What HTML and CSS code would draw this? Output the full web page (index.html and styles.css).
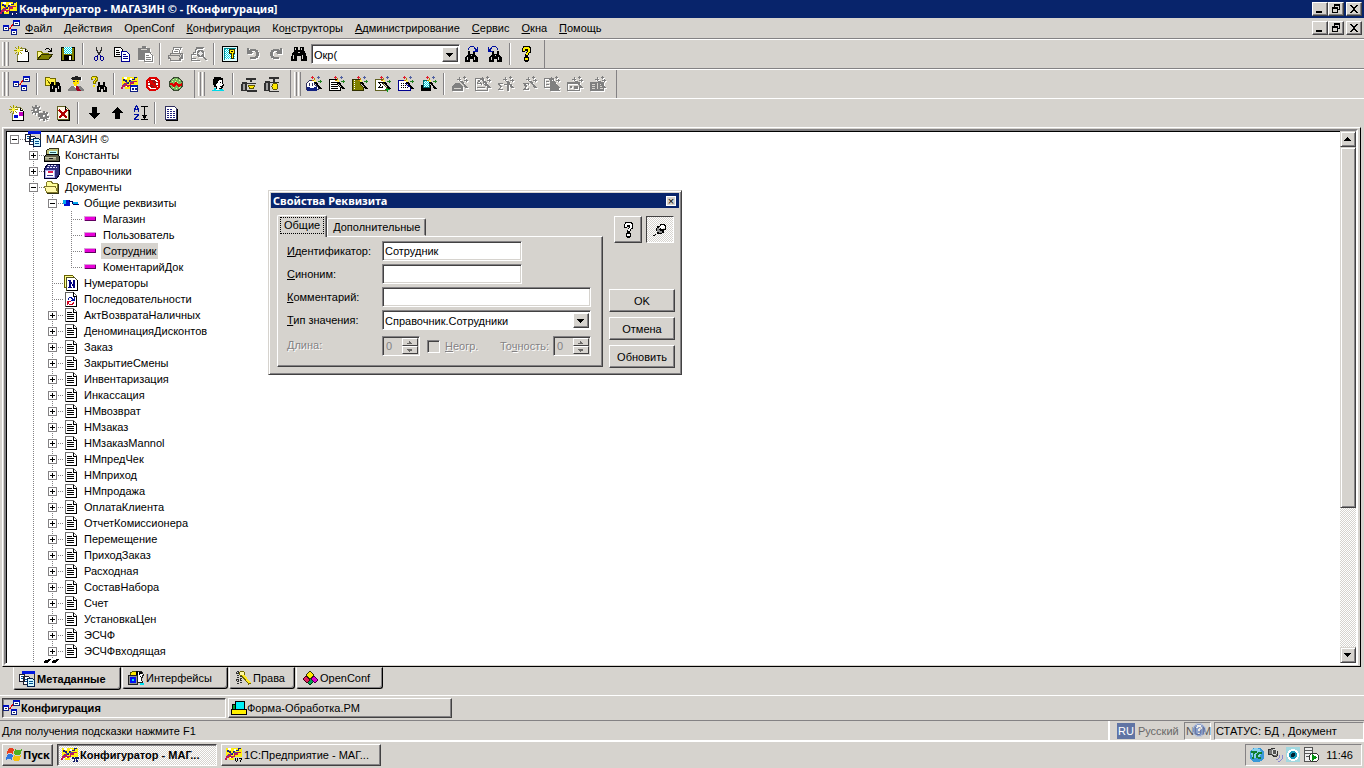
FILE: index.html
```html
<!DOCTYPE html>
<html lang="ru">
<head>
<meta charset="utf-8">
<title>Конфигуратор - МАГАЗИН © - [Конфигурация]</title>
<link rel="stylesheet" href="styles.css">
</head>
<body>
<svg class="sprite" aria-hidden="true">
<defs>
<pattern id="dither" width="2" height="2" patternUnits="userSpaceOnUse"><path fill="#fff" d="M0 0h2v2H0z"/><path fill="#d6d3ce" d="M0 0h1v1H0zM1 1h1v1H1z"/></pattern>
<pattern id="cyanDither" width="2" height="2" patternUnits="userSpaceOnUse"><path fill="#fff" d="M0 0h2v2H0z"/><path fill="#00d8e8" d="M0 0h1v1H0zM1 1h1v1H1z"/></pattern>
</defs>
<symbol id="logo" viewBox="0 0 18 16"><path fill="#ffef10" d="M1 1h16v9H9v3H4v-2H1z"/><path fill="#fff" d="M3 1h3v2H3zM9 2h2v2H9zM5 9h3v2H5z"/><path fill="#182078" d="M2 3h2v1h2v2h2V4h2v2H8v2H6V6H4V5H2zM11 3h2V1h3v1h-2v2h-3z"/><path fill="#c01858" d="M1 9h2V7h3v2h3V6h3V5h4v1h-3v2h-3v2H8v1H6v-1H4v1H2v2H0v-2h1z"/><path fill="#505098" d="M5 6h2v1H5zM9 5h3v1H9zM2 8h2v1H2z"/></symbol>
<symbol id="app" viewBox="0 0 18 16"><use href="#logo" width="18" height="16"/><path fill="#101868" d="M11 10h2v1h1v-1h4v2h-1v3h-2v-3h-1v3h-2v-3h-1z"/><path fill="#fff" d="M12 12h1v2h-1zM16 12h1v1h-1z"/></symbol>
<symbol id="appwin" viewBox="0 0 18 16"><use href="#logo" width="18" height="16"/><path fill="#fff" stroke="#102080" d="M9.500 9.500h7v6h-7z"/><path fill="#0018c0" d="M10 9h6v2h-6z"/><path fill="#102080" d="M11 12h2v2h-2zM14 12h2v2h-2z"/></symbol>
<symbol id="v7" viewBox="0 0 18 16"><use href="#logo" width="18" height="16"/><path fill="#000" d="M10 11h1v3h-1zM11 14h1v1h-1zM12 11h1v3h-1zM14 11h3v2h-1v2h-1v-2h1v-1h-2z"/></symbol>
<symbol id="net" viewBox="0 0 18 16"><path stroke="#e00000" fill="none" d="M5 8h2l4-5M7 8l4 4"/><path fill="#fff" stroke="#102080" d="M.5 5.500h5v5h-5z"/><path fill="#0010c0" d="M0 5h6v2H0z"/><path fill="#203060" d="M2 8h2v1H2z"/><path fill="#fff" stroke="#102080" d="M10.500 .5h6v5h-6zM8.500 9.500h5v5h-5z"/><path fill="#0010c0" d="M10 0h7v2h-7zM8 9h6v2H8z"/><path fill="#203060" d="M12 3h3v1h-3zM10 12h2v1h-2z"/></symbol>
<symbol id="new" viewBox="0 0 16 16"><path fill="#fff" d="M4 3h8l3 3v9H4z"/><path fill="none" stroke="#808040" d="M3.500 8v7M7 2.500h4.500l3 3"/><path fill="#000" d="M14 6h1v10H3v-1h11zM11 3h1v2h2v1h-3z"/><path fill="#a09800" d="M4 0h1v3H4zM1 1h1v1H1zM2 2h1v1H2zM7 1h1v1H7zM6 2h1v1H6zM0 4h3v1H0zM6 4h3v1H6zM2 6h1v1H2zM1 7h1v1H1zM6 6h1v1H6zM7 7h1v1H7zM4 6h1v3H4z"/><path fill="#fff840" d="M3 3h3v3H3zM5 1h1v1H5zM1 5h1v1H1zM8 3h1v1H8z"/></symbol>
<symbol id="open" viewBox="0 0 16 16"><path fill="#fff890" stroke="#808000" d="M.5 13.500v-8h4l1 2h6v3"/><path fill="#808000" stroke="#303000" d="M.5 13.500l4-5h11l-4 5z"/><path fill="#000" d="M8 3h1v1H8zM9 2h3v1H9zM12 3h1v1h1V2h1v4h-4V5h2V4h-1z"/></symbol>
<symbol id="save" viewBox="0 0 16 16"><path fill="#808000" stroke="#000" d="M1.500 1.500h13v13h-13z"/><path fill="url(#cyanDither)" d="M4 1h8v7H4z"/><path fill="#000" d="M4 9h8v6H4z"/><path fill="#fff" d="M9 10h2v4H9z"/></symbol>
<symbol id="cut" viewBox="0 0 16 16"><path fill="#303030" d="M5 1h1v4H5zM6 4h1v3H6zM7 6h2v3H7zM9 4h1v3H9zM10 1h1v4h-1z"/><path fill="#000090" d="M6 9h1v1H6zM4 10h3v1H4zM3 11h1v3H3zM6 11h1v3H6zM4 14h2v1H4zM9 9h1v1H9zM9 10h3v1H9zM9 11h1v3H9zM12 11h1v3h-1zM10 14h2v1h-2z"/></symbol>
<symbol id="copy" viewBox="0 0 16 16"><path fill="#fff" stroke="#000" d="M.5 1.500h6l2 2v7h-8z"/><path stroke="#000" d="M2 4.500h3M2 6.500h4M2 8.500h4"/><path fill="#fff" stroke="#000090" d="M7.500 5.500h5l3 3v7h-8z"/><path stroke="#000090" d="M9 8.500h3M9 10.500h5M9 12.500h5"/></symbol>
<symbol id="paste" viewBox="0 0 16 16"><path fill="#808080" d="M1 2h4V0h4v2h4v4h1v8H1z"/><path fill="#fff" stroke="#808080" d="M7.500 6.500h5l3 3v6h-8z"/><path stroke="#808080" d="M9 9.500h3M9 11.500h5M9 13.500h5"/><path fill="#d6d3ce" d="M4 3h6v1H4z"/></symbol>
<symbol id="print" viewBox="0 0 16 16"><path fill="#fff" d="M5 2h8l-2 6h3v5H2V9l2-1z"/><path fill="#808080" d="M5 1h9v1h-1v2h-1v3h3v6h-2v2H2v-2H0V9h2V7h2V4h1zM6 2v2H5v3h6V4h1V2z"/><path fill="#d6d3ce" d="M3 8h9v1H2v1H1v1h10v1H3v1h8v-2h1V9h1V8h1v1h-1v2h-1v1h-1v2H3v-1h8v-1H2v-1h9v-1H2V9h1z"/><path fill="#808080" d="M7 3h4v1H7zM6 5h4v1H6z"/></symbol>
<symbol id="preview" viewBox="0 0 16 16"><path fill="#808080" d="M5 1h8v1h-1v1H6v1H5v3H3v1h2v1H1v3h4v1H1v1h8v1H0V8h2V6h2V3h1z"/><circle cx="9.500" cy="7.500" r="3" fill="#e8e8e8" stroke="#808080" stroke-width="1.500"/><path stroke="#808080" stroke-width="2" d="M11.500 10l4 4"/></symbol>
<symbol id="key" viewBox="0 0 16 16"><path fill="#e0ffff" stroke="#000" d="M.5.500h15v15H.5z"/><path fill="#008890" d="M2 2h12v1H2zM2 2h1v12H2z"/><path fill="url(#cyanDither)" d="M3 3h10v10H3z"/><path fill="#ffec00" stroke="#303000" d="M7.500 3.500h5v4h-1v5h-2v-5h-2z"/><path fill="#000" d="M9 5h2v1H9z"/></symbol>
<symbol id="undo" viewBox="0 0 16 16"><path fill="#808080" d="M2 2h2v2h1V3h6v1h2v2h1v4h-1v2h-2v1H5v-2h5v-1h1V6h-1V5H7v1h1v1H7v1H2z"/></symbol>
<symbol id="redo" viewBox="0 0 16 16"><path fill="#808080" d="M14 2h-2v2h-1V3H5v1H3v2H2v4h1v2h2v1h6v-2H6v-1H5V6h1V5h3v1H8v1h1v1h5z"/></symbol>
<symbol id="bino" viewBox="0 0 16 16"><path fill="#000" d="M3 1h4v3h2V1h4v4l1 1 2 5v4h-6v-5H6v5H0v-4l2-5 1-1z"/><path fill="#d6d3ce" d="M4 2h1v2H4zM10 2h1v2h-1zM2 9h1v4H2zM11 9h1v4h-1zM7 6h2v1H7z"/></symbol>
<symbol id="minibino" viewBox="0 0 16 16"><path fill="#000" d="M4 5h2v3h3V5h2v3l3 4v4h-5v-3H6v3H1v-4l3-4z"/><path fill="#d6d3ce" d="M3 11h1v3H3zM10 11h1v3h-1zM7 9h1v1H7z"/></symbol>
<symbol id="findnext" viewBox="0 0 16 16"><use href="#minibino" width="16" height="16"/><path fill="#0010a0" d="M4 2h1v2H4zM5 1h1v1H5zM6 0h4v1H6zM10 1h1v1h1v1h1V1h1v5H9V5h2V3h-1z"/></symbol>
<symbol id="findprev" viewBox="0 0 16 16"><use href="#minibino" x="1" width="16" height="16"/><path fill="#0010a0" d="M11 2h-1v2h1zM10 1H9v1h1zM9 0H5v1h4zM5 1H4v1H3v1H2V1H1v5h5V5H4V3h1z"/></symbol>
<symbol id="help" viewBox="0 0 16 16"><path fill="#000" d="M5 0h7v1h1v6h-2v2h-1v2h1v4h-1v1H7v-1H6v-4h1V8h1V6h1V5H7v1H4V2h1z"/><path fill="#fff000" d="M6 1h5v1h1v4h-1v1h-1v2H8V7h1V6h1V3H7v2H5V2h1zM7 12h3v2H7z"/></symbol>
<symbol id="findfolder" viewBox="0 0 16 16"><path fill="#fff040" stroke="#706800" d="M.5 9.500v-8h4l1 1h5v7z"/><path stroke="#706800" d="M2 4l4 5"/><path fill="#000" d="M6 6h3v3h2V6h3l2 5v5h-4v-4h-2v4H5v-5z"/><path fill="#d6d3ce" d="M7 10h1v3H7zM13 10h1v3h-1z"/></symbol>
<symbol id="master" viewBox="0 0 16 16"><path fill="#202020" d="M2 2l6-2 6 2-2 2H5z"/><path fill="#ffe000" d="M5 4h6v4H9v3H6V8H5z"/><path fill="#404040" d="M5 5h2v1H5zM9 5h1v1H9z"/><path fill="#808080" d="M0 14l3-4h10l3 4v1H0z"/><path fill="#a00020" d="M7 10h3l3 5h-4z"/><path fill="#fff" d="M6 10h2v3zM13 1h1v4h-1z"/></symbol>
<symbol id="findhelp" viewBox="0 0 16 16"><path fill="#807800" d="M0 1h1V0h5v1h1v4H6v1H5v2H2V5h1V4h1V2H2v2H0z"/><path fill="#ffec00" d="M1 1h4v1h1v2H5v1H4v2H3V5h1V4h1V2H2v1H1zM2 9h2v2H2z"/><path fill="#000" d="M7 6h2v3h3V6h2v3l2 3v4h-4v-3h-2v3H6v-4l1-3z"/><path fill="#d6d3ce" d="M8 11h1v3H8zM13 11h1v3h-1z"/></symbol>
<symbol id="nobug" viewBox="0 0 16 16"><circle cx="8" cy="8" r="6.500" fill="#fff" stroke="#e00000" stroke-width="2"/><path fill="#c00000" d="M6 4h4v1h1v6h-1v1H6v-1H5V5h1z"/><path stroke="#802020" d="M3 6.500h10M3 9.500h10M5 3l2 2M11 3L9 5M8.500 4v8"/><path stroke="#fff" d="M4 5l8 8"/><path stroke="#e00000" stroke-width="2" d="M3 3l10 10"/></symbol>
<symbol id="gauge" viewBox="0 0 16 16"><circle cx="8" cy="8" r="6.500" fill="#78b860" stroke="#384830"/><path fill="#d8ffa0" d="M5 3h1v1H5zM8 3h1v1H8zM11 4h1v1h-1zM4 5h1v1H4zM7 5h1v1H7zM9 6h1v1H9zM5 11h1v1H5zM8 12h1v1H8zM11 11h1v1h-1z"/><path fill="none" stroke="#e00000" stroke-width="2" d="M2 8h2l2 2 2-3 3 3 3-2"/></symbol>
<symbol id="head" viewBox="0 0 16 16"><path fill="#00d8e8" d="M2 15v-1h2v-2h2v2h4v-1h3v1h1v1z"/><path fill="#fff" d="M7 3h5v3h1v2h1v1h-1v3h-2v1H9v1H6V8h1z"/><path fill="#000" d="M4 1h7v1h2v4h-1V4H9v1H8v2H7v1H6v2h1v3H6v-2H4V9H3V3h1zM12 6h1v2h1v2h-1v2h-1v1H9v-1h2v-1h-1v-1h2V9h1V8h-1zM10 6h1v1h-1z"/></symbol>
<symbol id="valve" viewBox="0 0 16 16"><path fill="#303030" d="M5 2h10v2h-4v2H9V4H5zM1 6h5v9H0V8h1z"/><path fill="#a0a0a0" d="M2 8h2v6H2z"/><path fill="#303030" d="M6 7h9v1H6zM6 14h10v2H6z"/><path fill="#ffe800" stroke="#605800" d="M7.500 9.500h6l-1 3h-4z"/></symbol>
<symbol id="valve2" viewBox="0 0 16 16"><path fill="#303030" d="M5 1h10v2h-4v3H9V3H5zM1 5h5v10H0V7h1z"/><path fill="#a0a0a0" d="M2 7h2v7H2z"/><path fill="#303030" d="M6 6h9v1H6zM5 15h10v1H5z"/><circle cx="11" cy="10.500" r="3" fill="#ffe800" stroke="#605800"/></symbol>
<symbol id="wand" viewBox="0 0 16 16"><path stroke="#000" stroke-width="2" d="M9 6l6 7"/><path fill="#c08000" d="M6 4h4v1H6zM8 2h1v4H8z"/><path fill="#e02030" d="M5 1h3v1H5zM6 0h1v3H6z"/><path fill="#208020" d="M12 5h4v1h-4zM14 4h1v3h-1z"/><path fill="#5060a0" d="M11 1h3v1h-3zM12 0h1v3h-1z"/><path fill="#f8f060" d="M8 4h2v2H8z"/></symbol>
<symbol id="gwand" viewBox="0 0 16 16"><path stroke="#808080" stroke-width="2" d="M9 5l6 7"/><path fill="#808080" d="M5 3h4v1H5zM7 1h1v4H7zM12 4h4v1h-4zM14 3h1v3h-1zM11 1h3v1h-3zM12 0h1v3h-1z"/></symbol>
<symbol id="c1" viewBox="0 0 16 16"><path fill="#fff" stroke="#303060" d="M.5 13.500v-6l3-3h5v4l4 3v2z"/><path fill="#102080" d="M1 11h10v4H1z"/><path fill="#fff" d="M4 11h4v1H4z"/><path fill="#303060" d="M3 7h1v3H3zM6 7h1v3H6z"/><use href="#wand" width="16" height="16"/></symbol>
<symbol id="c2" viewBox="0 0 16 16"><path fill="#fff" stroke="#000" d="M.5 3.500h8v5l3 3v3H.5z"/><path stroke="#000" d="M2 6.500h6M2 8.500h6M2 10.500h7M2 12.500h7"/><use href="#wand" width="16" height="16"/></symbol>
<symbol id="c3" viewBox="0 0 16 16"><path fill="#808000" stroke="#303000" d="M.5 3.500h8v5l3 3v3H.5z"/><path stroke="#fff" stroke-dasharray="1 1" d="M2.500 4v10"/><use href="#wand" width="16" height="16"/></symbol>
<symbol id="c4" viewBox="0 0 16 16"><path fill="#fff" stroke="#606020" d="M.5 3.500h8v5l3 3v3H.5z"/><path fill="#000" d="M3 6h5v2H7V7H5v1h1v2H5v1h2v-1h1v2H3v-1h1v-1h1V8H4V7H3z"/><path fill="#00a020" d="M10 13h5v1h-5zM12 11h1v5h-1z"/><use href="#wand" width="16" height="16"/></symbol>
<symbol id="c5" viewBox="0 0 16 16"><path fill="#fff" stroke="#000090" d="M.5 4.500h8v4l4 3v3H.5z"/><path stroke="#000" stroke-dasharray="1 1" d="M3 7.500h5M3 9.500h6M3 11.500h7"/><use href="#wand" width="16" height="16"/></symbol>
<symbol id="c6" viewBox="0 0 16 16"><path fill="#000" d="M0 9h10v6H0z"/><path fill="url(#cyanDither)" stroke="#006868" d="M2.500 4.500h6v7h-6z"/><use href="#wand" width="16" height="16"/></symbol>
<symbol id="g1" viewBox="0 0 16 16"><path fill="#808080" d="M0 11l3-4h5l3 4v4H0z"/><path fill="#d6d3ce" d="M2 12h7v1H2z"/><use href="#gwand" width="16" height="16"/></symbol>
<symbol id="g2" viewBox="0 0 16 16"><path fill="none" stroke="#808080" d="M.5 2.500h8v5l4 3v4H.5zM2 8l2-4 3 5M3 7.500h4M2 11.500h8"/><use href="#gwand" width="16" height="16"/></symbol>
<symbol id="g3" viewBox="0 0 16 16"><path fill="#808080" d="M0 7h5v1H2v1h1v1h1v1H3v1H2v1h3v1H0v-1h1v-1h1v-2H1V9H0zM9 7h2v8H9zM6 8h8v1H6z"/><use href="#gwand" width="16" height="16"/></symbol>
<symbol id="g4" viewBox="0 0 16 16"><path fill="#808080" d="M2 7h6v2H7V8H5v1h1v2H5v2h2v-1h1v2H2v-1h1v-1h1v-2H3V8H2z"/><use href="#gwand" width="16" height="16"/></symbol>
<symbol id="g5" viewBox="0 0 16 16"><path fill="none" stroke="#808080" d="M.5 2.500h9v9h-9zM2 5.500h3M2 8.500h3"/><path fill="#808080" d="M6 4l7 5 3 6H6z"/><use href="#gwand" width="16" height="16"/></symbol>
<symbol id="g6" viewBox="0 0 16 16"><path fill="none" stroke="#808080" d="M.5 6.500h12v8H.5z"/><path fill="#808080" d="M0 6h13v2H0zM3 10h2v2H3zM7 10h4v3H7z"/><use href="#gwand" width="16" height="16"/></symbol>
<symbol id="g7" viewBox="0 0 16 16"><path fill="#808080" d="M0 6h14v9H0z"/><path stroke="#d6d3ce" d="M2 8.500h3M2 10.500h3M2 12.500h3M7.500 7v6M10 8.500h3M10 10.500h3M10 12.500h3"/><use href="#gwand" width="16" height="16"/></symbol>
<symbol id="newobj" viewBox="0 0 16 16"><use href="#new" width="16" height="16"/><path fill="#0010d0" d="M5 10h4v3H5z"/><path fill="#c000c0" d="M10 7h4v4h-4z"/></symbol>
<symbol id="gears" viewBox="0 0 18 16"><path fill="#808080" d="M4 0h2v2h2V1h1v2H8v2h2v1H8v2h1v1H7V8H5v2H4V8H2v1H1V7h1V6H0V5h2V3H1V1h1v1h2zM4 4v2h2V4zM12 6h2v2h1V7h2v2h-1v2h2v2h-2v1h1v1h-2v-1h-1v2h-2v-2H9v1H8v-2h1v-1H7V9h2V8h3zM12 10v2h2v-2z"/></symbol>
<symbol id="delobj" viewBox="0 0 16 16"><path fill="#fff8e8" stroke="#606020" d="M2.500 1.500h8l3 3v10h-11z"/><path fill="none" stroke="#000" d="M10.500 1v4h4v10.500h-12"/><path stroke="#b00000" stroke-width="2" d="M4 5l8 8M12 5l-8 8"/></symbol>
<symbol id="down" viewBox="0 0 16 16"><path fill="#000" d="M6 2h5v6h3l-5 6h-1L3 8h3z"/></symbol>
<symbol id="up" viewBox="0 0 16 16"><path fill="#000" d="M6 14h5V8h3L9 2H8L3 8h3z"/></symbol>
<symbol id="sort" viewBox="0 0 16 16"><path fill="#0010a0" d="M4 0h1v1h1v2h1v4H6V5H3v2H2V3h1V1h1zM4 2v2h1V2zM2 9h5v2H6v1H5v1H4v1h3v1H2v-2h1v-1h1v-1h1v-1H2z"/><path fill="#000" d="M9 1h7v1h-3v8h2v1h-1v2h-1v1h3v1H9v-1h3v-1h-1v-2h-1v-1h2V2H9z"/></symbol>
<symbol id="list" viewBox="0 0 16 16"><path fill="#fff" stroke="#303060" d="M2.500 1.500h9l2 2v11h-11z"/><path stroke="#202080" stroke-dasharray="2 1" d="M4 4.500h6M4 6.500h8M4 8.500h8M4 10.500h8M4 12.500h8"/><path fill="none" stroke="#000" d="M14.500 4v11.500H3"/></symbol>
<symbol id="meta" viewBox="0 0 16 16"><path fill="#d6d3ce" stroke="#303030" d="M4.500 2.500h11v9h-11z"/><path fill="#0018e0" d="M3 0h13v3H3z"/><path fill="#fff" stroke="#202030" d="M.5 3.500h5v7h-5zM4.500 5.500h5l1 1v7h-6z"/><path fill="#d0f8ff" stroke="#002050" d="M8.500 7.500h5l2 2v6h-7z"/><path stroke="#005090" d="M2 5.500h2M2 7.500h2M6 8.500h2M6 10.500h2M10 10.500h4M10 12.500h4"/></symbol>
<symbol id="const" viewBox="0 0 16 16"><path fill="#c0c078" stroke="#303018" d="M2.500 8.500v-5l3-2h9v8z"/><path fill="#c8ffff" d="M5 4h8v4H5z"/><path stroke="#306060" d="M6 5.500h6M6 7.500h5"/><path fill="#606048" stroke="#000" d="M.5 9.500l2-2h11l2 2v5H.5z"/><path fill="#c8c8a8" d="M1 10h11v1H1z"/><path fill="#a0a080" d="M1 11h11v2H1z"/><path fill="#202020" d="M5 11h4v1H5z"/></symbol>
<symbol id="catalog" viewBox="0 0 16 16"><path fill="#303080" stroke="#000030" d="M.5 5.500l3-4h12v10l-3 4H.5z"/><path stroke="#e8e8ff" stroke-dasharray="2 1" d="M4 2.500h9M3 4.500h10"/><path fill="#b0b0f0" d="M1 7h10v8H1z"/><path fill="#fff" d="M2 8h8v6H2z"/><path fill="#e02050" d="M4 8h5v2H4z"/><path fill="#404090" d="M3 12h6v1H3z"/></symbol>
<symbol id="folder" viewBox="0 0 16 16"><path fill="#ffff98" stroke="#807828" d="M2.500 13.500v-10l1-1h4l1 2h5v9z"/><path fill="#fff8a8" stroke="#807828" d="M2.500 13.500l-2-6h11l2 6z"/><path fill="none" stroke="#303010" d="M14.500 5v9.500H3"/></symbol>
<symbol id="attrs" viewBox="0 0 16 16"><path fill="#0010d0" d="M1 5h6v6H1z"/><path fill="#00a8f0" d="M0 5h3v4H0zM10 7h5v2h-5z"/><path fill="#000060" d="M6 5h1v2H6zM7 6h3v1H7zM10 9h6v1h-6zM9 7h1v2H9z"/></symbol>
<symbol id="attr" viewBox="0 0 16 16"><path fill="#d8a0d8" d="M2 5h12v1H2zM2 6h1v4H2z"/><path fill="#e800d8" d="M3 6h10v4H3z"/><path fill="#600060" d="M3 9h10V6h1v4H3z"/></symbol>
<symbol id="numer" viewBox="0 0 16 16"><path fill="#ffff90" stroke="#686000" d="M1.500.5h8l2 2v10h-10z"/><path fill="#fff" stroke="#505020" d="M3.500 2.500h8l3 3v10h-11z"/><path fill="#000080" d="M5 5h3v2h1v2h1V5h2v8h-2v-2H9V9H8v3h1v1H5v-1h1V6H5z"/><path fill="none" stroke="#000" d="M14.500 5v10.500H4"/></symbol>
<symbol id="seq" viewBox="0 0 16 16"><path fill="#fff" stroke="#606060" d="M2.500 1.500h8l3 3v11h-11z"/><path fill="none" stroke="#000" d="M10.500 1v4h3v10.500h-11"/><path fill="#001098" d="M5 7h1V6h3v1h1v1h1V6h1v4H8V9h1V8H8V7H6v2H5z"/><path fill="#d00020" d="M4 10h4v1H6v2h3v-1h1v-1h1v2h-1v1H6v-1H5v1H4z"/></symbol>
<symbol id="doc" viewBox="0 0 16 16"><path fill="#fff" stroke="#707070" d="M2.500 1.500h8l3 3v10h-11z"/><path fill="none" stroke="#000" d="M10.500 2v3h3v9.500h-11"/><path stroke="#000" d="M4 5.500h5M4 7.500h7M4 9.500h7M4 11.500h7"/></symbol>
<symbol id="journal" viewBox="0 0 16 16"><path fill="#000" d="M0 2l5-2h2l-3 4H0zM8 2l5-2h2l-3 4H8z"/></symbol>
<symbol id="iface" viewBox="0 0 16 16"><path fill="#ffe800" stroke="#505000" d="M2.500 6V3l3-2h4v6z"/><path fill="#fff" stroke="#202020" d="M8.500 1.500h5l2 3-2 4 1 4h-5z"/><path fill="#000" d="M11 2h3v2h-2v1h-1zM8 1h2v7H8zM12 6h1v1h-1z"/><path fill="#909090" stroke="#202020" d="M.5 5.500h9v9h-9z"/><path fill="#0010f0" d="M2 7h6v6H2z"/><path fill="#00e0f0" d="M4 9h2v2H4zM12 13h4v2h-4z"/></symbol>
<symbol id="rights" viewBox="0 0 16 16"><path stroke="#303030" stroke-width="2" stroke-dasharray="1 1" fill="none" d="M1 3h6M3 1v14M6 4v10M1 10h6"/><circle cx="7" cy="3.500" r="2.500" fill="#fff8a0" stroke="#706800"/><path stroke="#706800" stroke-width="3" d="M8 6l7 8"/><path stroke="#ffe820" stroke-width="2" d="M8 5l7 8"/></symbol>
<symbol id="oconf" viewBox="0 0 16 16"><path fill="#00a050" stroke="#003010" d="M5 12l4-4 3 3-4 4z"/><path fill="#ffe800" stroke="#303000" d="M4 5l4-4 4 4-4 4z"/><path fill="#e02060" stroke="#400010" d="M1 9l3-3 4 4-3 3z"/><path fill="#e000d0" stroke="#400040" d="M9 9l3-3 4 4-3 3z"/></symbol>
<symbol id="form" viewBox="0 0 16 16"><path fill="#00a030" stroke="#000" d="M1.500 9.500v-5h3v5z"/><path fill="#00f0f8" stroke="#000" d="M4.500 1.500h9v8h-9z"/><path fill="#fff000" stroke="#000" d="M.5 9.500h15v5H.5z"/></symbol>
<symbol id="pushpin" viewBox="0 0 16 16"><path fill="#000" d="M1 13h2v-1h2v-1h1v1H4v1H3v1H1zM4 6h1V4h3V2h5v1h1v5h-2v3h-2v1H6v-1H5V9H4z"/><path fill="#909090" d="M5 6h2v2h1v1h2v2H7v-1H5z"/><path fill="#fff" d="M9 3h3v1h1v3h-4v-1H8V4h1z"/><path fill="#d6d3ce" d="M7 5h1v2H7zM11 6h2v1h-2z"/></symbol>
<symbol id="dhelp" viewBox="0 0 16 16"><path fill="#000" d="M5 0h7v1h1v6h-2v2h-1v2h1v4h-1v1H7v-1H6v-4h1V8h1V6h1V5H7v1H4V2h1z"/><path fill="#fff" d="M6 1h5v1h1v4h-1v1h-1v2H8V7h1V6h1V3H7v2H5V2h1zM7 12h3v2H7z"/></symbol>
<symbol id="win" viewBox="0 0 18 16"><path fill="#e84020" d="M3 2q3-2 6 0L8 7Q5 5 2 7z"/><path fill="#50b020" d="M10 2q3 2 7 0l-1 5q-4 2-7 0z"/><path fill="#3078e0" d="M2 8q3-2 6 0l-1 5q-3-2-6 0z"/><path fill="#f8c010" d="M9 8q3 2 7 0l-1 5q-4 2-7 0z"/></symbol>
<symbol id="tc" viewBox="0 0 16 16"><circle cx="8" cy="8" r="7.500" fill="#3898d8"/><circle cx="7" cy="6" r="5" fill="#88d0f0"/><path fill="none" stroke="#108030" stroke-width="1.500" d="M2 5h6M5 5l-1 7M13 6h-3l-2 2v2l2 1h2"/></symbol>
<symbol id="sound" viewBox="0 0 16 16"><path fill="#777" stroke="#333" d="M1 3l6-2 3 3v5l-2 1-4-3H1z"/><circle cx="7.500" cy="5" r="2.500" fill="#555" stroke="#ddd"/><path fill="none" stroke="#8888d0" d="M9 13q4-1 4-5M11 15q5-2 5-7"/></symbol>
<symbol id="eye" viewBox="0 0 16 16"><path fill="#a0d8e0" d="M1 0h14v15H1z"/><circle cx="8" cy="8" r="6" fill="#fff"/><circle cx="8" cy="8" r="4" fill="#1898b8"/><circle cx="8" cy="8" r="2" fill="#002030"/></symbol>
<symbol id="server" viewBox="0 0 16 16"><path fill="#eee" stroke="#555" d="M1.500.5h8v14h-8z"/><path stroke="#555" d="M2 3.500h7M2 6.500h7M3 9.500h3"/><circle cx="11" cy="10.500" r="4.500" fill="#fff" stroke="#333"/><path fill="#009010" d="M9 7l5 3.500L9 14z"/></symbol>
<symbol id="qball" viewBox="0 0 16 16"><circle cx="8" cy="8" r="6.500" fill="#6080c8" stroke="#b0c0e0"/><path fill="none" stroke="#fff" stroke-width="1.500" d="M6 6l1-2h2l1 2-2 2v1M8 11v1"/></symbol>
<symbol id="wmin" viewBox="0 0 12 10"><path fill="#000" d="M2 7h6v2H2z"/></symbol>
<symbol id="wrest" viewBox="0 0 12 10"><path fill="none" stroke="#000" d="M4.500 3.500v-3h5v5h-2M2.500 3.500h5v5h-5z"/><path fill="#000" d="M4 0h6v2H4zM2 3h6v2H2z"/></symbol>
<symbol id="wclose" viewBox="0 0 12 10"><path fill="#000" d="M2 1h2v1h1v1h2V2h1V1h2v1H9v1H8v1H7v2h1v1h1v1h1v1H8V8H7V7H5v1H4v1H2V8h1V7h1V6h1V4H4V3H3V2H2z"/></symbol>
<symbol id="adn" viewBox="0 0 8 4"><path fill="#000" d="M0 0h7v1H0zM1 1h5v1H1zM2 2h3v1H2zM3 3h1v1H3z"/></symbol>
<symbol id="aup" viewBox="0 0 8 4"><path fill="#000" d="M3 0h1v1H3zM2 1h3v1H2zM1 2h5v1H1zM0 3h7v1H0z"/></symbol>
</svg>

<header class="titlebar">
  <svg class="ico wide"><use href="#app"/></svg><h1>Конфигуратор - МАГАЗИН © - [Конфигурация]</h1>
  <div class="winbtns"><button aria-label="Свернуть"><svg><use href="#wmin"/></svg></button><button aria-label="Восстановить"><svg><use href="#wrest"/></svg></button><button class="x" aria-label="Закрыть"><svg><use href="#wclose"/></svg></button></div>
</header>
<nav class="menubar">
  <svg class="ico wide"><use href="#net"/></svg>
  <button><u>Ф</u>айл</button><button><u>Д</u>ействия</button><button>OpenConf</button><button><u>К</u>онфигурация</button><button>Ко<u>н</u>структоры</button><button><u>А</u>дминистрирование</button><button><u>С</u>ервис</button><button><u>О</u>кна</button><button><u>П</u>омощь</button>
  <div class="winbtns"><button aria-label="Свернуть окно"><svg><use href="#wmin"/></svg></button><button aria-label="Восстановить окно"><svg><use href="#wrest"/></svg></button><button class="x" aria-label="Закрыть окно"><svg><use href="#wclose"/></svg></button></div>
</nav>

<div class="barrow first">
  <div class="toolbar">
    <i class="grip"></i>
    <button aria-label="Создать"><svg class="ico"><use href="#new"/></svg></button><button aria-label="Открыть"><svg class="ico"><use href="#open"/></svg></button><button aria-label="Сохранить"><svg class="ico"><use href="#save"/></svg></button><i class="sep"></i>
    <button aria-label="Вырезать"><svg class="ico"><use href="#cut"/></svg></button><button aria-label="Копировать"><svg class="ico"><use href="#copy"/></svg></button><button disabled aria-label="Вставить"><svg class="ico"><use href="#paste"/></svg></button><i class="sep"></i>
    <button disabled aria-label="Печать"><svg class="ico"><use href="#print"/></svg></button><button disabled aria-label="Просмотр"><svg class="ico"><use href="#preview"/></svg></button><i class="sep"></i>
    <button aria-label="Пароль"><svg class="ico"><use href="#key"/></svg></button><button disabled aria-label="Отменить"><svg class="ico"><use href="#undo"/></svg></button><button disabled aria-label="Вернуть"><svg class="ico"><use href="#redo"/></svg></button><button aria-label="Поиск"><svg class="ico"><use href="#bino"/></svg></button>
    <div class="combo find"><input type="text" value="Окр(" aria-label="Искать"><button aria-label="Список"><svg class="arrow"><use href="#adn"/></svg></button></div>
    <button aria-label="Найти далее"><svg class="ico"><use href="#findnext"/></svg></button><button aria-label="Найти ранее"><svg class="ico"><use href="#findprev"/></svg></button><i class="sep"></i>
    <button aria-label="Помощь"><svg class="ico"><use href="#help"/></svg></button>
  </div>
</div>
<div class="barrow">
  <div class="toolbar">
    <i class="grip"></i>
    <button aria-label="Структура"><svg class="ico wide"><use href="#net"/></svg></button><i class="sep"></i>
    <button aria-label="Поиск в папке"><svg class="ico"><use href="#findfolder"/></svg></button><button aria-label="Мастер"><svg class="ico"><use href="#master"/></svg></button><button aria-label="Поиск в справке"><svg class="ico"><use href="#findhelp"/></svg></button><i class="sep"></i>
    <button aria-label="Предприятие"><svg class="ico wide"><use href="#appwin"/></svg></button><button aria-label="Отладчик"><svg class="ico"><use href="#nobug"/></svg></button><button aria-label="Монитор"><svg class="ico"><use href="#gauge"/></svg></button>
  </div>
  <div class="toolbar">
    <i class="grip"></i>
    <button aria-label="Пользователи"><svg class="ico"><use href="#head"/></svg></button><i class="sep"></i>
    <button aria-label="Сжать"><svg class="ico"><use href="#valve"/></svg></button><button aria-label="Распаковать"><svg class="ico"><use href="#valve2"/></svg></button>
  </div>
  <div class="toolbar">
    <i class="grip"></i>
    <button aria-label="Конструктор справочника"><svg class="ico"><use href="#c1"/></svg></button><button aria-label="Конструктор документа"><svg class="ico"><use href="#c2"/></svg></button><button aria-label="Конструктор журнала"><svg class="ico"><use href="#c3"/></svg></button><button aria-label="Конструктор отчета"><svg class="ico"><use href="#c4"/></svg></button><button aria-label="Конструктор таблицы"><svg class="ico"><use href="#c5"/></svg></button><button aria-label="Конструктор формы"><svg class="ico"><use href="#c6"/></svg></button><i class="sep"></i>
    <button disabled aria-label="Конструктор печати"><svg class="ico"><use href="#g1"/></svg></button><button disabled aria-label="Конструктор текста"><svg class="ico"><use href="#g2"/></svg></button><button disabled aria-label="Конструктор проводок"><svg class="ico"><use href="#g3"/></svg></button><button disabled aria-label="Конструктор запроса"><svg class="ico"><use href="#g4"/></svg></button><button disabled aria-label="Конструктор ввода"><svg class="ico"><use href="#g5"/></svg></button><button disabled aria-label="Конструктор движений"><svg class="ico"><use href="#g6"/></svg></button><button disabled aria-label="Конструктор счетов"><svg class="ico"><use href="#g7"/></svg></button>
  </div>
</div>
<div class="barrow local">
  <button aria-label="Новый объект"><svg class="ico"><use href="#newobj"/></svg></button><button disabled aria-label="Свойства"><svg class="ico wide"><use href="#gears"/></svg></button><button aria-label="Удалить"><svg class="ico"><use href="#delobj"/></svg></button><i class="sep"></i>
  <button aria-label="Вниз"><svg class="ico"><use href="#down"/></svg></button><button aria-label="Вверх"><svg class="ico"><use href="#up"/></svg></button><button aria-label="Сортировать"><svg class="ico"><use href="#sort"/></svg></button><i class="sep"></i>
  <button aria-label="Описание"><svg class="ico"><use href="#list"/></svg></button>
</div>

<main class="frame"><div class="well">
  <div class="treebox">
  <ul class="tree">
    <li><div class="row"><span class="exp"><button class="minus" aria-label="Свернуть ветвь"></button></span><svg class="ico"><use href="#meta"/></svg><span class="lbl">МАГАЗИН ©</span></div>
      <ul>
        <li><div class="row"><span class="exp"><button class="plus" aria-label="Развернуть"></button></span><svg class="ico"><use href="#const"/></svg><span class="lbl">Константы</span></div></li>
        <li><div class="row"><span class="exp"><button class="plus" aria-label="Развернуть"></button></span><svg class="ico"><use href="#catalog"/></svg><span class="lbl">Справочники</span></div></li>
        <li><div class="row"><span class="exp"><button class="minus" aria-label="Свернуть ветвь"></button></span><svg class="ico"><use href="#folder"/></svg><span class="lbl">Документы</span></div>
          <ul>
            <li><div class="row"><span class="exp"><button class="minus" aria-label="Свернуть ветвь"></button></span><svg class="ico"><use href="#attrs"/></svg><span class="lbl">Общие реквизиты</span></div>
              <ul>
                <li><div class="row"><span class="exp"></span><svg class="ico"><use href="#attr"/></svg><span class="lbl">Магазин</span></div></li>
                <li><div class="row"><span class="exp"></span><svg class="ico"><use href="#attr"/></svg><span class="lbl">Пользователь</span></div></li>
                <li><div class="row"><span class="exp"></span><svg class="ico"><use href="#attr"/></svg><span class="lbl selected">Сотрудник</span></div></li>
                <li><div class="row"><span class="exp"></span><svg class="ico"><use href="#attr"/></svg><span class="lbl">КоментарийДок</span></div></li>
              </ul></li>
            <li><div class="row"><span class="exp"></span><svg class="ico"><use href="#numer"/></svg><span class="lbl">Нумераторы</span></div></li>
            <li><div class="row"><span class="exp"></span><svg class="ico"><use href="#seq"/></svg><span class="lbl">Последовательности</span></div></li>
            <li><div class="row"><span class="exp"><button class="plus" aria-label="Развернуть"></button></span><svg class="ico"><use href="#doc"/></svg><span class="lbl">АктВозвратаНаличных</span></div></li>
            <li><div class="row"><span class="exp"><button class="plus" aria-label="Развернуть"></button></span><svg class="ico"><use href="#doc"/></svg><span class="lbl">ДеноминацияДисконтов</span></div></li>
            <li><div class="row"><span class="exp"><button class="plus" aria-label="Развернуть"></button></span><svg class="ico"><use href="#doc"/></svg><span class="lbl">Заказ</span></div></li>
            <li><div class="row"><span class="exp"><button class="plus" aria-label="Развернуть"></button></span><svg class="ico"><use href="#doc"/></svg><span class="lbl">ЗакрытиеСмены</span></div></li>
            <li><div class="row"><span class="exp"><button class="plus" aria-label="Развернуть"></button></span><svg class="ico"><use href="#doc"/></svg><span class="lbl">Инвентаризация</span></div></li>
            <li><div class="row"><span class="exp"><button class="plus" aria-label="Развернуть"></button></span><svg class="ico"><use href="#doc"/></svg><span class="lbl">Инкассация</span></div></li>
            <li><div class="row"><span class="exp"><button class="plus" aria-label="Развернуть"></button></span><svg class="ico"><use href="#doc"/></svg><span class="lbl">НМвозврат</span></div></li>
            <li><div class="row"><span class="exp"><button class="plus" aria-label="Развернуть"></button></span><svg class="ico"><use href="#doc"/></svg><span class="lbl">НМзаказ</span></div></li>
            <li><div class="row"><span class="exp"><button class="plus" aria-label="Развернуть"></button></span><svg class="ico"><use href="#doc"/></svg><span class="lbl">НМзаказMannol</span></div></li>
            <li><div class="row"><span class="exp"><button class="plus" aria-label="Развернуть"></button></span><svg class="ico"><use href="#doc"/></svg><span class="lbl">НМпредЧек</span></div></li>
            <li><div class="row"><span class="exp"><button class="plus" aria-label="Развернуть"></button></span><svg class="ico"><use href="#doc"/></svg><span class="lbl">НМприход</span></div></li>
            <li><div class="row"><span class="exp"><button class="plus" aria-label="Развернуть"></button></span><svg class="ico"><use href="#doc"/></svg><span class="lbl">НМпродажа</span></div></li>
            <li><div class="row"><span class="exp"><button class="plus" aria-label="Развернуть"></button></span><svg class="ico"><use href="#doc"/></svg><span class="lbl">ОплатаКлиента</span></div></li>
            <li><div class="row"><span class="exp"><button class="plus" aria-label="Развернуть"></button></span><svg class="ico"><use href="#doc"/></svg><span class="lbl">ОтчетКомиссионера</span></div></li>
            <li><div class="row"><span class="exp"><button class="plus" aria-label="Развернуть"></button></span><svg class="ico"><use href="#doc"/></svg><span class="lbl">Перемещение</span></div></li>
            <li><div class="row"><span class="exp"><button class="plus" aria-label="Развернуть"></button></span><svg class="ico"><use href="#doc"/></svg><span class="lbl">ПриходЗаказ</span></div></li>
            <li><div class="row"><span class="exp"><button class="plus" aria-label="Развернуть"></button></span><svg class="ico"><use href="#doc"/></svg><span class="lbl">Расходная</span></div></li>
            <li><div class="row"><span class="exp"><button class="plus" aria-label="Развернуть"></button></span><svg class="ico"><use href="#doc"/></svg><span class="lbl">СоставНабора</span></div></li>
            <li><div class="row"><span class="exp"><button class="plus" aria-label="Развернуть"></button></span><svg class="ico"><use href="#doc"/></svg><span class="lbl">Счет</span></div></li>
            <li><div class="row"><span class="exp"><button class="plus" aria-label="Развернуть"></button></span><svg class="ico"><use href="#doc"/></svg><span class="lbl">УстановкаЦен</span></div></li>
            <li><div class="row"><span class="exp"><button class="plus" aria-label="Развернуть"></button></span><svg class="ico"><use href="#doc"/></svg><span class="lbl">ЭСЧФ</span></div></li>
            <li><div class="row"><span class="exp"><button class="plus" aria-label="Развернуть"></button></span><svg class="ico"><use href="#doc"/></svg><span class="lbl">ЭСЧФвходящая</span></div></li>
          </ul></li>
        <li><div class="row"><span class="exp"><button class="plus" aria-label="Развернуть"></button></span><svg class="ico"><use href="#journal"/></svg><span class="lbl">Журналы</span></div></li>
      </ul></li>
  </ul>
  </div>
  <div class="scroll"><button aria-label="Прокрутить вверх"><svg class="arrow"><use href="#aup"/></svg></button><div class="thumb"></div><div class="track"></div><button aria-label="Прокрутить вниз"><svg class="arrow"><use href="#adn"/></svg></button></div>
</div></main>

<div class="pages">
  <button class="page active"><svg class="ico"><use href="#meta"/></svg>Метаданные</button><button class="page p2"><svg class="ico"><use href="#iface"/></svg>Интерфейсы</button><button class="page p3"><svg class="ico"><use href="#rights"/></svg>Права</button><button class="page p4"><svg class="ico"><use href="#oconf"/></svg>OpenConf</button>
</div>
<div class="windows">
  <button class="pressed"><svg class="ico wide"><use href="#net"/></svg>Конфигурация</button><button><svg class="ico"><use href="#form"/></svg>Форма-Обработка.PM</button>
</div>
<footer class="status">
  <span class="hint">Для получения подсказки нажмите F1</span>
  <span class="lang"><b>RU</b>Русский</span>
  <span class="panel num">NUM<svg class="ico"><use href="#qball"/></svg></span>
  <span class="panel state">СТАТУС: БД , Документ</span>
</footer>
<div class="taskbar">
  <button class="start"><svg class="ico wide"><use href="#win"/></svg>Пуск</button>
  <button class="task current"><svg class="ico wide"><use href="#app"/></svg>Конфигуратор - МАГ...</button>
  <button class="task"><svg class="ico wide"><use href="#v7"/></svg>1С:Предприятие - МАГ...</button>
  <div class="tray"><svg class="ico"><use href="#tc"/></svg><svg class="ico"><use href="#sound"/></svg><svg class="ico"><use href="#eye"/></svg><svg class="ico"><use href="#server"/></svg><time>11:46</time></div>
</div>

<section class="dialog" role="dialog" aria-labelledby="dlg-title">
  <header><h2 id="dlg-title">Свойства Реквизита</h2><button aria-label="Закрыть свойства">×</button></header>
  <div class="body">
    <div class="sheet">
      <div class="tabs"><button class="tab on"><span>Общие</span></button><button class="tab">Дополнительные</button></div>
      <form class="fields">
        <label for="f1"><u>И</u>дентификатор:</label><input id="f1" class="box mid" type="text" value="Сотрудник">
        <label for="f2"><u>С</u>иноним:</label><input id="f2" class="box mid" type="text">
        <label for="f3"><u>К</u>омментарий:</label><input id="f3" class="box" type="text">
        <label for="f4"><u>Т</u>ип значения:</label><div class="combo"><select id="f4"><option>Справочник.Сотрудники</option></select><i class="drop"><svg class="arrow"><use href="#adn"/></svg></i></div>
        <label for="f5" class="off"><u>Д</u>лина:</label>
        <div class="nums">
          <span class="spin"><input id="f5" type="text" value="0" disabled><span class="ud"><button type="button" disabled aria-label="Длина больше"><svg><use href="#aup"/></svg></button><button type="button" disabled aria-label="Длина меньше"><svg><use href="#adn"/></svg></button></span></span>
          <input id="f6" class="check" type="checkbox" disabled><label for="f6" class="off"><u>Н</u>еогр.</label>
          <label for="f7" class="off prec">То<u>ч</u>ность:</label>
          <span class="spin"><input id="f7" type="text" value="0" disabled><span class="ud"><button type="button" disabled aria-label="Точность больше"><svg><use href="#aup"/></svg></button><button type="button" disabled aria-label="Точность меньше"><svg><use href="#adn"/></svg></button></span></span>
        </div>
      </form>
    </div>
    <div class="actions">
      <div class="tools"><button aria-label="Справка"><svg class="ico"><use href="#dhelp"/></svg></button><button class="pin" aria-label="Закрепить"><svg class="ico"><use href="#pushpin"/></svg></button></div>
      <button class="cmd">OK</button><button class="cmd">Отмена</button><button class="cmd">Обновить</button>
    </div>
  </div>
</section>
</body>
</html>
```
FILE: styles.css
```css
:root {
  --face: #d6d3ce;
  --dark: #848284;
  --deep: #424142;
  --navy: #08246b;
  --dither: repeating-conic-gradient(#fff 0 25%, var(--face) 0 50%) 0 0 / 2px 2px;
}
* { box-sizing: border-box; }
body {
  margin: 0;
  height: 100vh;
  display: flex;
  flex-direction: column;
  position: relative;
  overflow: hidden;
  background: var(--face);
  color: #000;
  font: 11px/14px "Liberation Sans", Arial, sans-serif;
}
button, input, select { font: inherit; color: inherit; margin: 0; padding: 0; border: 0; background: none; border-radius: 0; }
h1, h2 { margin: 0; font-size: 11px; font-weight: bold; }
svg { display: block; shape-rendering: crispEdges; flex: none; }
.sprite { position: absolute; width: 0; height: 0; }
.ico { width: 16px; height: 16px; }
.ico.wide { width: 18px; }
.arrow { width: 8px; height: 4px; }

.titlebar { height: 18px; display: flex; align-items: center; background: var(--navy); color: #fff; }
.titlebar h1 { flex: 1; font-family: "Noto Sans", sans-serif; padding-left: 1px; }
.winbtns { display: flex; margin-right: 2px; }
.winbtns button, .menubar .winbtns button { width: 16px; height: 14px; padding: 1px; background: var(--face); border: 1px solid; border-color: #fff var(--deep) var(--deep) #fff; box-shadow: inset -1px -1px var(--dark); }
.winbtns svg { width: 12px; height: 10px; }
.winbtns button.x { margin-left: 2px; }

.menubar { height: 21px; display: flex; align-items: center; padding-left: 3px; border-bottom: 1px solid var(--dark); }
.menubar button { padding: 0 6px; }
.menubar .ico { margin-right: -2px; }
.menubar .winbtns { margin-left: auto; }

.barrow { display: flex; height: 29px; border-top: 1px solid #fff; padding-left: 2px; }
.barrow.first { height: 30px; border-bottom: 1px solid var(--dark); }
.toolbar { display: flex; align-items: center; border-right: 1px solid var(--dark); padding-right: 7px; margin-right: 3px; height: 28px; }
.toolbar > button, .local > button { width: 23px; height: 22px; display: flex; align-items: center; justify-content: center; }
.barrow button:disabled .ico { filter: drop-shadow(1px 1px 0 #fff); }
.grip { width: 7px; height: 24px; margin-right: 1px; border: solid; border-width: 0 1px 0 0; border-color: var(--dark); background: linear-gradient(90deg, #fff 1px, var(--face) 1px 2px, var(--dark) 2px 3px, var(--face) 3px 4px, #fff 4px 5px, var(--face) 5px); }
.sep { width: 2px; height: 22px; margin: 0 3px; background: linear-gradient(90deg, var(--dark) 1px, #fff 1px); }
.local { align-items: center; padding-left: 5px; }

.combo { display: flex; height: 20px; background: #fff; border: 1px solid; border-color: var(--dark) #fff #fff var(--dark); box-shadow: inset 1px 1px var(--deep); padding: 2px 1px 1px 2px; }
.combo input, .combo select { flex: 1; min-width: 0; padding-left: 0; appearance: none; outline: 0; }
.combo button, .drop { width: 16px; display: flex; align-items: center; justify-content: center; background: var(--face); border: 1px solid; border-color: #fff var(--deep) var(--deep) #fff; box-shadow: inset -1px -1px var(--dark); }
.combo.find { width: 149px; margin-left: 1px; }

.frame { flex: 1; min-height: 0; display: flex; margin: 0 3px 0 2px; border: 1px solid; border-color: #fff #000 #000 #fff; padding: 1px 2px 1px 1px; }
.well { flex: 1; display: flex; border: 2px solid; border-color: var(--dark) #fff #fff var(--dark); box-shadow: inset 1px 1px #000; background: #fff; }
.treebox { flex: 1; overflow: hidden; min-height: 0; }
.tree, .tree ul { list-style: none; margin: 0; padding: 0; }
.tree ul { padding-left: 19px; }
.tree ul > li { background: repeating-linear-gradient(#848284 0 1px, transparent 1px 2px) 8px 0 / 1px 100% no-repeat; }
.tree ul ul ul > li:last-child { background-size: 1px 9px; }
.row { display: flex; align-items: center; height: 16px; white-space: nowrap; }
.exp { width: 19px; height: 16px; padding: 4px; background: repeating-linear-gradient(90deg, #848284 0 1px, transparent 1px 2px) 8px 8px / 11px 1px no-repeat; }
.exp button { display: block; width: 9px; height: 9px; border: 1px solid var(--dark); }
.exp .minus { background: linear-gradient(#000, #000) 1px 3px / 5px 1px no-repeat #fff; }
.exp .plus { background: linear-gradient(#000, #000) 1px 3px / 5px 1px no-repeat, linear-gradient(#000, #000) 3px 1px / 1px 5px no-repeat #fff; }
.lbl { margin-left: 3px; padding: 1px 2px; }
.selected { background: var(--face); }

.scroll { width: 16px; display: flex; flex-direction: column; background: var(--dither); }
.scroll button, .thumb { background: var(--face); border: 1px solid; border-color: var(--face) var(--deep) var(--deep) var(--face); box-shadow: inset 1px 1px #fff, inset -1px -1px var(--dark); }
.scroll button { height: 16px; display: flex; align-items: center; justify-content: center; flex: none; }
.thumb { flex: 72; }
.track { flex: 28; }

.pages { display: flex; gap: 1px; height: 28px; padding-left: 13px; align-items: flex-start; }
.page { height: 22px; display: flex; align-items: center; gap: 2px; padding: 0 6px 0 5px; border: 1px solid; border-color: transparent #000 #000 #fff; border-radius: 0 0 3px 3px; box-shadow: inset -1px -1px var(--dark); }
.page.active { font-weight: bold; width: 108px; height: 23px; }
.p2 { width: 106px; } .p3 { width: 66px; } .p4 { width: 87px; }

.windows { height: 25px; border-top: 1px solid #fff; display: flex; gap: 2px; padding: 2px; }
.windows button { width: 224px; height: 20px; display: flex; align-items: center; padding-left: 2px; border: 1px solid; border-color: #fff var(--deep) var(--deep) #fff; box-shadow: inset -1px -1px var(--dark); }
.windows .pressed { font-weight: bold; border-color: var(--deep) #fff #fff var(--deep); box-shadow: inset 1px 1px var(--dark); padding-left: 0; }

.status { height: 21px; display: flex; align-items: center; border-top: 1px solid var(--dark); border-bottom: 1px solid #fff; padding-left: 2px; gap: 3px; }
.hint { flex: 1; }
.lang { display: flex; align-items: center; height: 20px; width: 73px; gap: 3px; padding-left: 7px; border-left: 2px solid #fff; color: #686868; }
.lang b { background: #6074a4; color: #fff; font-weight: normal; padding: 1px; }
.panel { border: 1px solid; border-color: var(--dark) #fff #fff var(--dark); height: 18px; padding: 1px; }
.num { position: relative; width: 27px; color: #555; }
.num .ico { position: absolute; left: 6px; top: -1px; opacity: .6; }
.state { width: 150px; }

.taskbar { height: 27px; border-top: 1px solid #fff; display: flex; align-items: flex-start; padding: 2px 2px 0; gap: 4px; }
.taskbar button { height: 22px; display: flex; align-items: center; padding: 0 2px; white-space: nowrap; border: 1px solid; border-color: #fff var(--deep) var(--deep) #fff; box-shadow: inset -1px -1px var(--dark); }
.taskbar .start { font-weight: bold; width: 51px; font-family: "Noto Sans", sans-serif; }
.taskbar .task { width: 160px; gap: 1px; padding: 0 3px; }
.taskbar .current { font-weight: bold; background: var(--dither); border-color: var(--deep) #fff #fff var(--deep); box-shadow: inset 1px 1px var(--dark); }
.tray { margin-left: auto; height: 22px; display: flex; align-items: center; gap: 2px; padding: 0 8px 0 3px; border: 1px solid; border-color: var(--dark) #fff #fff var(--dark); }
.tray time { margin-left: 5px; }

.dialog { position: absolute; left: 268px; top: 190px; width: 414px; background: var(--face); border: 1px solid; border-color: var(--face) var(--deep) var(--deep) var(--face); box-shadow: inset 1px 1px #fff, inset -1px -1px var(--dark); padding: 2px; }
.dialog header { display: flex; align-items: center; height: 15px; background: var(--navy); color: #fff; padding: 0 3px 0 2px; }
.dialog h2 { flex: 1; font-family: "Noto Sans", sans-serif; }
.dialog header button { width: 10px; height: 10px; background: var(--face); color: #000; line-height: 8px; border: 1px solid #fff; }
.body { display: flex; gap: 6px; padding: 8px 4px 4px 6px; }
.sheet { flex: 1; min-width: 0; }
.tabs { display: flex; align-items: flex-end; height: 20px; }
.tab { height: 18px; padding: 0 5px; border: 1px solid; border-color: #fff var(--deep) transparent #fff; border-radius: 2px 2px 0 0; box-shadow: inset -1px 0 var(--dark); }
.tab.on { height: 22px; margin-bottom: -1px; padding: 1px 2px 3px; background: var(--face); border-bottom: 0; position: relative; }
.tab.on span { display: block; border: 1px dotted #000; padding: 0 3px 1px; }
.fields { display: grid; grid-template-columns: 95px 1fr; row-gap: 3px; align-items: center; padding: 4px 11px 10px 9px; border: 1px solid; border-color: #fff var(--deep) var(--deep) #fff; box-shadow: inset -1px -1px var(--dark); }
.box { height: 20px; width: 100%; background: #fff; padding: 1px 2px; border: 1px solid; border-color: var(--dark) #fff #fff var(--dark); box-shadow: inset 1px 1px var(--deep), inset -1px -1px var(--face); }
.box.mid { width: 140px; }
.nums { display: flex; align-items: center; margin-top: 3px; }
.off { color: var(--dark); text-shadow: 1px 1px #fff; }
.spin { display: flex; width: 38px; height: 20px; padding: 1px; border: 1px solid; border-color: var(--dark) #fff #fff var(--dark); box-shadow: inset 1px 1px var(--deep); }
.spin input { flex: 1; min-width: 0; color: var(--dark); padding-left: 2px; }
.ud { width: 16px; display: flex; flex-direction: column; }
.ud button { flex: 1; display: flex; align-items: center; justify-content: center; border: 1px solid; border-color: #fff var(--deep) var(--deep) #fff; }
.ud svg { width: 6px; height: 3px; opacity: .5; }
.check { appearance: none; width: 13px; height: 13px; margin: 0 5px 0 7px; border: 1px solid; border-color: var(--dark) #fff #fff var(--dark); box-shadow: inset 1px 1px var(--deep); }
.prec { margin-left: auto; margin-right: 4px; }
.actions { width: 66px; display: flex; flex-direction: column; gap: 5px; }
.tools { display: flex; gap: 4px; padding-left: 5px; margin-bottom: 41px; }
.tools button { width: 28px; height: 27px; flex: none; display: flex; align-items: center; justify-content: center; }
.tools button, .cmd { border: 1px solid; border-color: #fff var(--deep) var(--deep) #fff; box-shadow: inset -1px -1px var(--dark); }
.tools .pin { background: var(--dither); border-color: var(--deep) #fff #fff var(--deep); box-shadow: none; }
.cmd { height: 23px; }
```
